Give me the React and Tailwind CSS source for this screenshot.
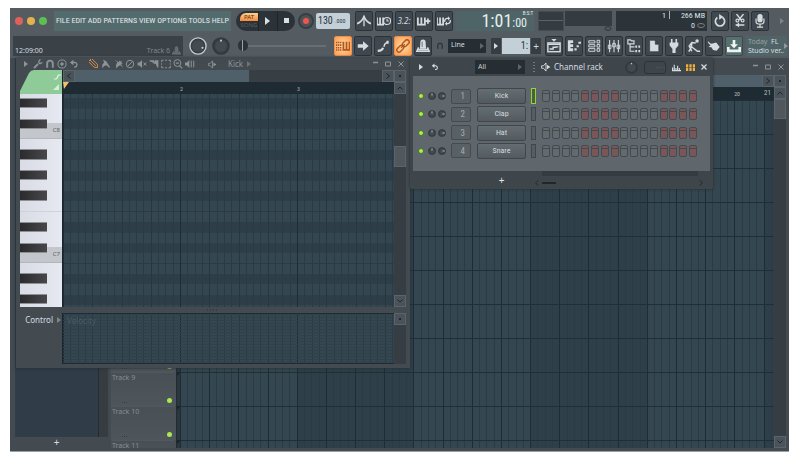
import React, { useState } from 'react';
import clsx from 'clsx';

const CONDENSED = "font-['Liberation_Sans_Narrow','Roboto_Condensed',Roboto,sans-serif]";

const MENU = ['FILE', 'EDIT', 'ADD', 'PATTERNS', 'VIEW', 'OPTIONS', 'TOOLS', 'HELP'];
const CHANNELS = ['Kick', 'Clap', 'Hat', 'Snare'];
// B down to C, true = black key
const OCTAVE = [false, true, false, true, false, true, false, false, true, false, true, false];

const Svg = ({ w = 12, h = 12, box = '0 0 16 16', children, className }) => (
    <svg
        width={w}
        height={h}
        viewBox={box}
        fill="none"
        stroke="currentColor"
        strokeWidth="1.6"
        className={clsx('shrink-0', className)}
        aria-hidden="true"
    >
        {children}
    </svg>
);

const icons = {
    metronome: (
        <>
            <path d="M0 11Q5 9.500 8 3Q11 9.500 16 11" strokeWidth="1.800" />
            <path d="M8 2v12" strokeWidth="1.500" />
        </>
    ),
    waitInput: (
        <>
            <path d="M0 4v8h7V4M3.500 4v8" strokeWidth="2" />
            <circle cx="11.5" cy="8" r="4" strokeWidth="1.300" />
            <path d="M11.500 5.500V8h2" strokeWidth="1.200" />
        </>
    ),
    overdub: <path d="M1 4v8h8V4M5 4v8M12.500 5v6M9.800 8h5.500" strokeWidth="2" />,
    loopRec: (
        <>
            <path d="M0 4v8h7V4M3.500 4v8" strokeWidth="2" />
            <path d="M9 9a3 3 0 0 1 3-4h1M15 7a3 3 0 0 1-3 4h-1" />
            <path d="M12.500 2.500l2.500 2.500-2.500 2.500zM11.500 8.500L9 11l2.500 2.500z" fill="currentColor" stroke="none" />
        </>
    ),
    typing: (
        <>
            <path d="M0 4h7M0 7h7M0 10h7M0 12.500h7" strokeDasharray="1.500 .7" strokeWidth="1.800" />
            <path d="M8.500 3v9.500h7V3M12 3v9" strokeWidth="2" />
        </>
    ),
    arrow: <path d="M2 6h6V2.500L14.500 8 8 13.500V10H2z" fill="currentColor" stroke="none" />,
    slide: (
        <>
            <path d="M2 13.500q5 0 6-3.500" strokeWidth="2.600" />
            <path d="M9 9q.500-4 4-5.500" strokeWidth="1.500" />
            <path d="M12 2h2.500v3.500H12z" fill="currentColor" stroke="none" />
        </>
    ),
    link: (
        <g transform="rotate(-45 8 8)" strokeWidth="1.600">
            <rect x="-1" y="5.500" width="9" height="5" rx="2.500" />
            <rect x="8" y="5.500" width="9" height="5" rx="2.500" />
            <path d="M5 8h6" />
        </g>
    ),
    stamp: (
        <>
            <path d="M4.500 11L5 3.500Q5 .500 8 .500t3 3L11.500 11z" fill="currentColor" stroke="none" />
            <path d="M3 9.500L1 14h14l-2-4.500M3 12h10" strokeWidth="1.800" />
            <path d="M7 3v6" stroke="#596268" strokeWidth="1" />
        </>
    ),
    playlist: (
        <>
            <path d="M5 0h6L8 3z" fill="currentColor" stroke="none" />
            <rect x="1" y="4.500" width="14" height="10" />
            <path d="M1 6h14M3 11.500h4v-2h4M10 9h3" />
        </>
    ),
    pianoRoll: (
        <path d="M1 1.500h6v3H4v1.500h3v3H4v1.500h3v3.500H1zM8.500 10.500h2.500V13H8.500zM11 7h2.500v2.500H11zM13 3h3v2.500h-3z" fill="currentColor" stroke="none" />
    ),
    rack: (
        <>
            <path d="M2 2h7v2.500H2zM2 6.500h7V9H2zM2 11h7v3H2z" strokeWidth="1.100" />
            <path d="M11.500 1.500h3v3h-3zM11.500 6.300h3v3h-3zM11.500 11h3v3h-3z" strokeWidth="1.100" />
        </>
    ),
    mixer: (
        <>
            <path d="M3 1v14M8 1v14M13 1v14" strokeWidth="1.200" />
            <path d="M1.500 7h3v4h-3zM6.500 5h3v4h-3zM11.500 7h3v4h-3z" strokeWidth="1.100" />
        </>
    ),
    browser: (
        <>
            <path d="M1 1h3l1 1.200h3V5.500H1zM3.500 6v8h5M3.500 9h5" strokeWidth="1.300" />
            <path d="M9.500 7.500h2v2.500h-2zM13 7.500h2v2.500h-2zM9.500 12.500h2V15h-2zM13 12.500h2V15h-2z" fill="currentColor" stroke="none" />
        </>
    ),
    file: <path d="M3 1.500h6.500L13.500 6v8.500H3zM9.500 1.500V6h4" fill="currentColor" stroke="#353d43" strokeWidth=".8" />,
    plug: <path d="M4.500 0h1.800v4h3.400V0h1.800v4H13v3.500L9.800 11v5H6.200v-5L3 7.500V4h1.500z" fill="currentColor" stroke="none" />,
    shovel: (
        <>
            <circle cx="11.5" cy="2.200" r="2" fill="currentColor" stroke="none" />
            <path d="M10 4.500L5.500 4 2.500 8l3 6M5.500 4.500L5 9.500l-3 5M4 8l8 6h3" strokeWidth="1.700" />
        </>
    ),
    hand: (
        <path d="M1 2.500l3.500 3 2-.500 4-1 4 5-3.500 4.500-4-1-2-3L1.500 9l2.500-1.500L1 4z" fill="currentColor" stroke="none" />
    ),
    download: (
        <path d="M6.500 1h3v5H12.500L8 10.500 3.500 6H6.500zM0 9h3v3h10V9h3v6H0z" fill="currentColor" stroke="none" />
    ),
    restart: (
        <>
            <path d="M5 4a5.300 5.300 0 1 0 6 0" strokeWidth="1.900" />
            <path d="M7 0l5 3.500-5 3z" fill="currentColor" stroke="none" />
        </>
    ),
    cut: (
        <>
            <path d="M4 0l5.500 7M12 0L6.500 7M3 12.500h10" strokeWidth="1.600" />
            <circle cx="5" cy="7.500" r="1.600" strokeWidth="1.300" />
            <circle cx="11" cy="7.500" r="1.600" strokeWidth="1.300" />
            <path d="M7 9.500l-3.500 3L7 15.500z" fill="currentColor" stroke="none" />
        </>
    ),
    mic: (
        <>
            <rect x="5" y="0" width="6" height="9.500" rx="3" fill="currentColor" stroke="none" />
            <path d="M3.500 5v3.500q0 3 4.500 3t4.500-3V5M8 11.500V15M4.500 15h7" strokeWidth="1.400" />
        </>
    ),
    magnet: <path d="M3.500 14V7a4.500 4.500 0 0 1 9 0v7" strokeWidth="3" />,
    wrench: (
        <>
            <path d="M1.500 14.500L8 8" strokeWidth="3" />
            <path d="M13.500 6.500h-4v-4M9.500 6.500A4 4 0 0 1 12 1M10 7a4 4 0 0 0 5-2" strokeWidth="1.800" />
        </>
    ),
    target: (
        <>
            <circle cx="8" cy="8" r="6.500" />
            <circle cx="8" cy="8" r="2" fill="currentColor" />
        </>
    ),
    undo: (
        <>
            <path d="M4 5.500h5.500a3.800 3.800 0 0 1 0 7.500H8" strokeWidth="2.200" />
            <path d="M7 1L1.500 5.500 7 10z" fill="currentColor" stroke="none" />
        </>
    ),
    pencil: (
        <g transform="rotate(45 8 8)">
            <path d="M-1 4.500h13l4 3.500-4 3.500H-1zM-1 8h13" strokeWidth="1.500" />
        </g>
    ),
    brush: <path d="M3 1l5 2 4 6 3 5-3-1-3-3-4 1-3 4V9l3-4z" fill="currentColor" stroke="none" />,
    brushPlus: <path d="M2 1l4 2 3 2 2-3 1 2 3-1-2 3 3 1-3 1 3 6-4-4-3 1-4 4V9l2-4z" fill="currentColor" stroke="none" />,
    ban: (
        <>
            <circle cx="8" cy="8" r="6" />
            <path d="M4 12l8-8" />
        </>
    ),
    mute: (
        <>
            <path d="M1 5.500h3l4-4v13l-4-4H1z" fill="currentColor" stroke="none" />
            <path d="M10.500 5.500l4.500 5M15 5.500l-4.500 5" strokeWidth="1.500" />
        </>
    ),
    slice: <path d="M1 2h7v3.500H5.500L4 4.500H1zM9 2h6v12l-2-1-2-5-4-1V4.500h2z" fill="currentColor" stroke="none" />,
    select: <path d="M1 5V2h3M12 2h3v3M15 11v3h-3M4 14H1v-3M6.500 2h3M6.500 14h3M1 7v2M15 7v2" />,
    zoomTool: (
        <>
            <circle cx="7" cy="6.500" r="5.500" />
            <path d="M4.500 6.500h5M10.500 11l4.500 4" strokeWidth="2" />
        </>
    ),
    playback: (
        <>
            <path d="M0 5.500h3l4-4v13l-4-4H0z" fill="currentColor" stroke="none" />
            <path d="M10 2.500v11M14 2.500v11" strokeWidth="1.600" />
        </>
    ),
    speaker: (
        <>
            <path d="M1 6h3l4-4.500v13L4 10H1z" strokeWidth="1.500" />
            <path d="M9.500 4.500v7L15 8z" fill="currentColor" stroke="none" />
        </>
    ),
    graph: <path d="M1 14V8M4 14V3M7 14V9M10 14V5M13 14V9M0 13.500h16" strokeWidth="2" />,
    steps: <path d="M0 2h4v5H0zM6 2h4v5H6zM12 2h4v5h-4zM0 8h4v6H0zM6 8h4v6H6zM12 8h4v6h-4z" fill="currentColor" stroke="none" />,
};

const Icon = ({ name, size = 12, className }) => (
    <Svg w={size} h={size} className={className}>
        {icons[name]}
    </Svg>
);

const Arrow = ({ className }) => (
    <Svg w={4} h={6} box="0 0 4 6" className={className}>
        <path d="M0 0l4 3-4 3z" fill="currentColor" stroke="none" />
    </Svg>
);

const ToolButton = ({ label, icon, active, teal, children }) => (
    <button
        aria-label={label}
        className={clsx(
            'flex h-5 w-[18px] shrink-0 items-center justify-center rounded-[2px] border',
            active && 'border-[#f08f4a] bg-radial from-[#ffe0a8] to-[#fb9a4e] text-[#b0561c]',
            teal && 'border-[#3c4a50] bg-[#55706f] text-[#eef4f4]',
            !active && !teal && 'border-[#2b3339] bg-[#40484f] text-[#d5dce0]'
        )}
    >
        {children || <Icon name={icon} size={14} />}
    </button>
);

const Knob = ({ label, size, value = 50, bright }) => (
    <label className="relative flex shrink-0 items-center justify-center">
        <Svg w={size} h={size} box="0 0 20 20">
            <circle cx="10" cy="10" r="9" stroke={bright ? '#c3ccd0' : '#30383d'} strokeWidth="1.500" fill="#363e44" />
            <circle cx="10" cy="10" r="6.500" fill="#434b51" stroke="none" />
            {size > 10 ? (
                <circle cx={value > 50 ? 15 : 10} cy={value > 50 ? 12 : 4} r="1.200" fill="#c3cace" stroke="none" />
            ) : (
                <path d={value > 50 ? 'M11 10h6' : 'M10 9V3'} stroke="#c3cace" strokeWidth="2" />
            )}
        </Svg>
        <input type="range" aria-label={label} defaultValue={value} className="absolute inset-0 w-full opacity-0" />
    </label>
);

const WindowButtons = () => (
    <div className="flex items-center gap-[7px] text-[#8b9499]">
        <button aria-label="Minimize">
            <Svg w={5} h={6} box="0 0 5 6"><path d="M0 1.500h5" strokeWidth="1.500" /></Svg>
        </button>
        <button aria-label="Maximize">
            <Svg w={6} h={6} box="0 0 6 6"><path d="M.5 1h5v4h-5z" strokeWidth="1" /></Svg>
        </button>
        <button aria-label="Close">
            <Svg w={6} h={6} box="0 0 6 6"><path d="M.5.5l5 5M5.500.5l-5 5" strokeWidth="1" /></Svg>
        </button>
    </div>
);

const ScrollButton = ({ label, d }) => (
    <button aria-label={label} className="flex size-3 shrink-0 items-center justify-center border border-[#5a646a] bg-[#4a5359] text-[#1f272c]">
        <Svg w={6} h={6} box="0 0 6 6"><path d={d} strokeWidth="1" /></Svg>
    </button>
);

const UP = 'M.5 4.500L3 2l2.500 2.500';
const DOWN = 'M.5 1.500L3 4l2.500-2.500';
const LEFT = 'M4.500.5L1.500 3l3 2.500';
const RIGHT = 'M1.500.5l3 2.500-3 2.500';
const DOT = 'M2.500 2v2M3.500 2v2';

// One bar: four beats with four steps each
const Bar = ({ className, soft }) => (
    <div className={clsx('flex', className)}>
        {Array.from({ length: 16 }, (_, i) => (
            <div
                key={i}
                className={clsx(
                    'flex-1 border-l',
                    i % 4 !== 0 && 'border-[#2a3b45]',
                    i % 4 === 0 && (soft && i > 0 ? 'border-[#263741]' : 'border-[#1d2d37]')
                )}
            />
        ))}
    </div>
);

const TopToolbar = () => (
    <div className="flex h-[25px] items-center pl-[5px]">
        <div className="flex shrink-0 gap-1">
            <button aria-label="Close window" className="size-2 rounded-full bg-[#e0605a]" />
            <button aria-label="Minimize window" className="size-2 rounded-full bg-[#e5b14a]" />
            <button aria-label="Zoom window" className="size-2 rounded-full bg-[#5cbf54]" />
        </div>
        <nav className={clsx('ml-[7px] flex h-5 w-[177px] shrink-0 items-center justify-between bg-[#546b6e] px-[2px] text-[8px] text-[#e3eaec]', CONDENSED)}>
            {MENU.map((item) => (
                <a key={item} href="#">{item}</a>
            ))}
        </nav>
        <div className="ml-[5px] flex h-5 w-[59px] shrink-0 overflow-hidden rounded-full bg-[#2b3238] text-[#d9dfe2]">
            <div className="flex w-[22px] flex-col justify-center pl-1 text-[6px] leading-[8px]">
                <button className="rounded-tl-md bg-linear-to-b from-[#ffd08a] to-[#f58a3c] text-[#4a2a10]">PAT</button>
                <button className="text-[#565e63]">SONG</button>
            </div>
            <button aria-label="Play" className="flex flex-1 items-center justify-center border-l border-[#1e2529]">
                <Svg w={5} h={8} box="0 0 5 8"><path d="M0 0l5 4-5 4z" fill="currentColor" stroke="none" /></Svg>
            </button>
            <button aria-label="Stop" className="flex flex-1 items-center justify-center border-l border-[#1e2529]">
                <span className="size-[5px] bg-[#d9dfe2]" />
            </button>
        </div>
        <button aria-label="Record" className="ml-[3px] flex size-4 shrink-0 items-center justify-center rounded-full border-2 border-[#363e43] bg-[#4b5358]">
            <span className="size-[6px] rounded-full bg-[#f0544c]" />
        </button>
        <div className={clsx('ml-[2px] flex h-4 w-[34px] shrink-0 items-center rounded-[2px] bg-[#c3d0d8] pl-[2px] text-[#27323a]', CONDENSED)}>
            <input aria-label="Tempo" defaultValue="130" className="w-[17px] text-[10px]" />
            <input aria-label="Tempo fraction" defaultValue=".000" className="w-[15px] text-[6px]" />
        </div>
        <div className="ml-[5px] flex shrink-0 gap-[2px]">
            <ToolButton label="Metronome" icon="metronome" />
            <ToolButton label="Wait for input" icon="waitInput" />
            <ToolButton label="Countdown">
                <span className="text-[8px] italic">3.2:</span>
            </ToolButton>
            <ToolButton label="Overdub" icon="overdub" />
            <ToolButton label="Loop record" icon="loopRec" />
        </div>
        <div className={clsx('ml-[2px] flex h-5 w-[79px] shrink-0 items-center justify-end bg-[#4f6466] pr-px leading-none text-[#e6eff0]', CONDENSED)}>
            <span className="text-[18px]">1:01</span>
            <div className="flex flex-col">
                <span className="self-end text-[5px] leading-[5px]">B:S:T</span>
                <span className="mr-[6px] text-[12px] leading-[15px]">:00</span>
            </div>
        </div>
        <div className="ml-1 flex h-5 w-[26px] shrink-0 items-center border border-[#454d53] bg-[#343c42]">
            <div className="h-px w-full bg-[#59636a]" />
        </div>
        <div className="ml-px flex h-5 w-[47px] shrink-0 flex-col items-end">
            <div className="h-[15px] w-full bg-[#343c42]" />
            <Svg w={8} h={5} box="0 0 8 5"><ellipse cx="4" cy="2.500" rx="3" ry="1.800" stroke="#2c3439" strokeWidth="1" /></Svg>
        </div>
        <div className={clsx('ml-1 flex h-5 w-[91px] shrink-0 bg-[#2c343a] text-[8px] leading-[10px] text-[#dfe5e8]', CONDENSED)}>
            <div className="flex w-[54px] items-start justify-end">
                <span className="mr-[3px]">1</span>
                <span className="h-2 w-px bg-[#aab2b6]" />
            </div>
            <div className="flex flex-1 flex-col items-end pr-[2px]">
                <span>266 MB</span>
                <span className="flex items-center gap-[2px]">
                    0
                    <Svg w={8} h={5} box="0 0 8 5"><ellipse cx="4" cy="2.500" rx="3.500" ry="2" stroke="#778086" strokeWidth="1" /></Svg>
                </span>
            </div>
        </div>
        <div className="ml-1 flex shrink-0 gap-[2px]">
            <ToolButton label="Restart" icon="restart" />
            <ToolButton label="Cut" icon="cut" />
            <ToolButton label="Record audio" icon="mic" />
        </div>
        <Arrow className="mr-[5px] ml-auto text-[#7d868b]" />
    </div>
);

const SecondToolbar = () => (
    <div className="flex h-[25px] items-center pl-[3px] text-[#d5dce0]">
        <div className="flex h-5 w-[170px] shrink-0 items-end justify-between bg-[#3a4248] px-[2px] text-[7px] leading-[11px]">
            <span>12:09:00</span>
            <span className="flex items-center gap-[2px] text-[#7d868b]">
                Track 6
                <Icon name="stamp" size={9} className="text-[#667076]" />
            </span>
        </div>
        <div className="ml-[6px] flex shrink-0 items-center gap-[5px]">
            <Knob label="Main volume" size={18} value={80} bright />
            <Knob label="Main pitch" size={18} />
        </div>
        <input
            type="range"
            aria-label="Shuffle"
            defaultValue={0}
            className="ml-2 h-3 w-[88px] shrink-0 appearance-none bg-[linear-gradient(#666f75,#666f75)] bg-[length:100%_2px] bg-center bg-no-repeat [&::-webkit-slider-thumb]:h-[11px] [&::-webkit-slider-thumb]:w-[10px] [&::-webkit-slider-thumb]:appearance-none [&::-webkit-slider-thumb]:rounded-full [&::-webkit-slider-thumb]:bg-[linear-gradient(90deg,#2c3439_4px,#9aa3a8_4px_5px,#2c3439_5px)]"
        />
        <div className="ml-2 flex shrink-0 gap-[2px]">
            <ToolButton label="Typing keyboard" icon="typing" active />
            <ToolButton label="Auto scroll" icon="arrow" />
            <ToolButton label="Slide" icon="slide" />
            <ToolButton label="Link" icon="link" active />
            <ToolButton label="Stamp" icon="stamp" />
        </div>
        <Icon name="magnet" size={8} className="mx-1 text-[#343b40]" />
        <div className="relative flex shrink-0 items-center">
            <select aria-label="Snap" className="h-[14px] w-[38px] appearance-none bg-[#272e33] pl-[3px] text-[7px] text-[#d5dce0]">
                <option>Line</option>
            </select>
            <Arrow className="pointer-events-none absolute right-[2px] text-[#5d666b]" />
        </div>
        <div className="ml-[5px] flex h-4 shrink-0 items-center gap-px">
            <button aria-label="Pattern picker" className="flex h-4 w-[10px] items-center justify-center bg-[#363e44]">
                <Arrow />
            </button>
            <input aria-label="Pattern" defaultValue="1:" className={clsx('h-4 w-7 bg-[#c3d0d8] pr-[2px] text-right text-[10px] text-[#27323a]', CONDENSED)} />
            <button aria-label="Add pattern" className="h-4 w-[10px] bg-[#363e44] text-[10px] leading-4">+</button>
        </div>
        <div className="ml-1 flex shrink-0 gap-[2px]">
            <ToolButton label="Playlist" icon="playlist" />
            <ToolButton label="Piano roll" icon="pianoRoll" />
            <ToolButton label="Channel rack" icon="rack" />
            <ToolButton label="Mixer" icon="mixer" />
            <ToolButton label="Browser" icon="browser" />
            <ToolButton label="Project" icon="file" />
            <ToolButton label="Plugins" icon="plug" />
            <ToolButton label="Tools" icon="shovel" />
            <ToolButton label="Touch" icon="hand" />
            <ToolButton label="Downloads" icon="download" teal />
        </div>
        <a href="#" className="mr-[2px] ml-[3px] flex h-5 min-w-0 flex-1 items-center justify-between bg-[#506467] pr-[3px] pl-[2px] text-[7px] leading-[9px] whitespace-nowrap">
            <span>
                <span className="text-[#93a3a5]">Today</span>&nbsp; FL
                <br />
                Studio ver..
            </span>
            <Arrow className="text-[#8b999b]" />
        </a>
    </div>
);

const TrackHeader = ({ n }) => {
    const [on, setOn] = useState(true);
    return (
        <div className="flex h-[34px] shrink-0 items-stretch">
            <div className="flex w-[65px] flex-col justify-between rounded-tr-[3px] border-t border-[#51595e] bg-linear-to-b from-[#485056] to-[#4e565b] pr-1 pl-px">
                <span className="text-[7px] leading-[9px] text-[#858d92]">Track {n}</span>
                <div className="flex items-end justify-between pb-[3px] pl-[10px] text-[#363e44]">
                    <Svg w={6} h={1} box="0 0 6 1"><path d="M0 .5h6" strokeWidth="1" strokeDasharray="1 1" /></Svg>
                    <input
                        type="checkbox"
                        aria-label={`Track ${n} on`}
                        checked={on}
                        onChange={() => setOn(!on)}
                        className="size-[5px] appearance-none rounded-full bg-[#353d42] checked:bg-[#a9e84e]"
                    />
                </div>
            </div>
            <div className="w-1 border-l border-[#222b31] bg-[#2b363d] text-[#1a2329]">
                <Svg w={4} h={4} box="0 0 4 4"><path d="M0 0h4L0 4z" fill="currentColor" stroke="none" /></Svg>
            </div>
        </div>
    );
};

const Playlist = () => (
    <section aria-label="Playlist" className="flex h-full gap-[3px] bg-[#434b51] pr-[3px] pb-[3px] pl-[5px]">
        <aside className="flex w-[93px] shrink-0 flex-col">
            <div className="flex flex-1 bg-[#303c47]">
                <div className="flex-1" />
                <div className="w-[10px] border-l border-[#232c32] bg-[#353c42]" />
            </div>
            <button aria-label="Add picker item" className="h-[11px] pr-[10px] text-[10px] leading-[11px] text-[#d5dce0]">+</button>
        </aside>
        <div className="flex min-w-0 flex-1 flex-col">
            <div className="flex h-[17px] shrink-0 items-center justify-end pr-[2px]">
                <WindowButtons />
            </div>
            <div className="flex h-3 shrink-0">
                <div className="flex-1 bg-[#50606a]" />
                <ScrollButton label="Scroll right" d={RIGHT} />
                <ScrollButton label="Zoom" d={DOT} />
            </div>
            <div className="flex min-h-0 flex-1">
                <div className="flex min-w-0 flex-1 flex-col">
                    <div className={clsx('flex h-[13px] shrink-0 items-center justify-end gap-6 bg-[#1e2b33] pr-[3px] text-[#b5bec2]', CONDENSED)}>
                        <span className="text-[6px]">20</span>
                        <span className="text-[7px]">21</span>
                    </div>
                    <div className="flex min-h-0 flex-1">
                        <div className="h-full shrink-0 overflow-hidden">
                            {Array.from({ length: 11 }, (_, i) => (
                                <TrackHeader key={i} n={i + 1} />
                            ))}
                        </div>
                        <div className="relative min-w-0 flex-1 overflow-hidden">
                            <div className="flex h-full w-[1167px]">
                                {Array.from({ length: 10 }, (_, i) => (
                                    <Bar key={i} className={clsx('flex-1', i % 2 === 0 ? 'bg-[#34464f]' : 'bg-[#2e3f49]')} />
                                ))}
                            </div>
                            <div className="absolute inset-0 bg-[repeating-linear-gradient(to_bottom,#1f2f38_0_1px,transparent_1px_34px)]" />
                        </div>
                    </div>
                </div>
                <div className="flex w-3 shrink-0 flex-col bg-[#363e44]">
                    <ScrollButton label="Scroll up" d={UP} />
                    <div className="h-5 border border-[#5a646a] bg-[#50585e]" />
                    <div className="flex-1" />
                    <ScrollButton label="Scroll down" d={DOWN} />
                </div>
            </div>
        </div>
    </section>
);

const KeyOctave = ({ name }) => (
    <div className="relative flex h-[124px] shrink-0 flex-col">
        {/* C key under the black keys */}
        <div className="absolute inset-x-0 bottom-0 flex h-4 items-center justify-end border-b border-[#b3b7bb] bg-[#c3c6ca] pr-[2px] text-[6px] text-[#5d6367]">
            {name}
        </div>
        {OCTAVE.map((black, i) => (
            <div key={i} className={clsx('relative flex-1', i === 7 && 'border-t border-[#ced2da]')}>
                {black && <div className="h-full w-[27px] border-y border-[#8d9196] bg-linear-to-r from-[#2b2b2d] to-[#48484a]" />}
            </div>
        ))}
    </div>
);

const GridOctave = () => (
    <div className="flex h-[124px] shrink-0 flex-col">
        {OCTAVE.map((black, i) => (
            <div key={i} className={clsx('flex-1', black ? 'bg-[#2d3e48]' : 'bg-[#34464f]', (i === 0 || i === 7) && 'border-t border-[#2b3b45]')} />
        ))}
    </div>
);

const BeatLines = () => (
    <div className="absolute inset-0 flex overflow-hidden">
        {[1, 2, 3].map((bar) => (
            <Bar key={bar} soft className="w-[117px] shrink-0" />
        ))}
    </div>
);

const PIANO_TOOLS = [
    ['wrench', 'Tools'],
    ['magnet', 'Snap'],
    ['target', 'Stamp'],
    ['undo', 'Undo'],
    ['pencil', 'Draw'],
    ['brush', 'Paint'],
    ['brushPlus', 'Paint drum'],
    ['ban', 'Delete'],
    ['mute', 'Mute'],
    ['slice', 'Slice'],
    ['select', 'Select'],
    ['zoomTool', 'Zoom'],
    ['playback', 'Playback'],
];

const PianoRoll = () => (
    <section aria-label="Piano roll" className="absolute top-0 left-[6px] flex w-[394px] flex-col bg-[#434b51] pr-1 pb-1 pl-1 shadow-[0_0_3px_#222b31]">
        <header className="flex h-3 items-center text-[#8b9499]">
            <Arrow className="ml-1 mr-[5px]" />
            <div className="flex gap-[2px]">
                {PIANO_TOOLS.map(([icon, label]) => (
                    <button
                        key={icon}
                        aria-label={label}
                        className={clsx(icon === 'pencil' && 'ml-2 text-[#d98a4a]')}
                    >
                        <Icon name={icon} size={10} />
                    </button>
                ))}
            </div>
            <Icon name="speaker" size={9} className="ml-[13px]" />
            <a href="#" className="ml-[11px] flex items-center gap-1 text-[8px]">
                Kick
                <Arrow className="text-[#6a7378]" />
            </a>
            <div className="mr-[2px] ml-auto">
                <WindowButtons />
            </div>
        </header>

        <div className="flex">
            <div className="w-[43px] shrink-0 border-r border-[#1b252b]">
                <Svg w={42} h={24} box="0 0 42 24" className="block">
                    <path d="M0 24V21L9 3Q11 0 14 0H42V24z" fill="#8fcb98" stroke="none" />
                    <path d="M34 9h2q1 0 1.500-2T39 5h2" stroke="#e8f5ea" strokeWidth="1.200" />
                    <path d="M33 20l6-6v6z" fill="#d5edd9" stroke="none" />
                </Svg>
                <div className="flex h-[213px] flex-col overflow-hidden bg-linear-to-r from-[#d9dce4] to-[#e6e9f2]">
                    <div className="flex h-[45px] shrink-0 flex-col justify-end overflow-hidden">
                        <KeyOctave name="C8" />
                    </div>
                    <KeyOctave name="C7" />
                    <KeyOctave />
                </div>
            </div>
            <div className="flex min-w-0 flex-1 flex-col">
                <div className="flex h-3 bg-[#373f44]">
                    <ScrollButton label="Scroll left" d={LEFT} />
                    <div className="w-[174px] bg-[#50606a]" />
                    <div className="flex-1" />
                    <ScrollButton label="Scroll right" d={RIGHT} />
                </div>
                <div className={clsx('flex h-3 items-center bg-[#1e2b33] text-[6px] text-[#a5afb4]', CONDENSED)}>
                    <div className="flex h-full w-[117px] items-start">
                        <Svg w={6} h={7} box="0 0 6 7"><path d="M0 0h6L1 7z" fill="#f0c36a" stroke="none" /></Svg>
                    </div>
                    <div className="w-[117px]">2</div>
                    <div>3</div>
                </div>
                <div className="relative h-[213px] overflow-hidden">
                    <div className="flex h-[45px] flex-col justify-end overflow-hidden">
                        <GridOctave />
                    </div>
                    <GridOctave />
                    <GridOctave />
                    <BeatLines />
                </div>
            </div>
            <div className="flex w-3 shrink-0 flex-col bg-[#363e44]">
                <ScrollButton label="Zoom" d={DOT} />
                <ScrollButton label="Scroll up" d={UP} />
                <div className="mt-[52px] h-[21px] border border-[#5a646a] bg-[#50585e]" />
                <div className="flex-1" />
                <ScrollButton label="Scroll down" d={DOWN} />
            </div>
        </div>

        <div className="flex h-[6px] items-center justify-center text-[#2a3237]">
            <Svg w={12} h={2} box="0 0 12 2"><path d="M0 1h12" strokeWidth="1" strokeDasharray="1 2" /></Svg>
        </div>

        <div className="flex h-[51px]">
            <div className="w-[43px] shrink-0 border-r border-[#1b252b] pr-px">
                <button className="flex h-[14px] w-full items-center justify-end gap-1 text-[8px] text-[#d5dce0]">
                    Control
                    <Arrow className="text-[#7d868b]" />
                </button>
            </div>
            <div className="relative min-w-0 flex-1 border-y border-[#1f2c34] bg-[#34464f]">
                <BeatLines />
                <div className="absolute inset-0 bg-[repeating-linear-gradient(to_bottom,#30414b_0_1px,transparent_1px_3px)]" />
                <span className="absolute top-0 left-1 text-[8px] leading-[13px] text-[#4b5b63]">Velocity</span>
            </div>
            <div className="w-3 shrink-0 bg-[#363e44]">
                <ScrollButton label="Scroll lane" d={DOT} />
            </div>
        </div>
    </section>
);

const Channel = ({ name, index, selected, onSelect }) => {
    const [steps, setSteps] = useState(Array(16).fill(false));

    const toggle = (i) => setSteps(steps.map((s, n) => (n === i ? !s : s)));

    return (
        <div className="flex h-4 items-center pl-[5px]">
            <input type="checkbox" defaultChecked aria-label={`${name} on`} className="size-[6px] appearance-none rounded-full border border-[#4c6a38] bg-[#353d42] checked:bg-[#a9f04a]" />
            <div className="ml-1 flex gap-[2px]">
                <Knob label={`${name} pan`} size={8} />
                <Knob label={`${name} volume`} size={8} value={80} />
            </div>
            <input
                aria-label={`${name} mixer track`}
                defaultValue={index + 1}
                className={clsx('ml-[5px] h-[15px] w-5 rounded-[2px] border border-[#434b50] bg-[#596166] pr-[5px] text-right text-[9px] text-[#a3abb0]', CONDENSED)}
            />
            <button
                onClick={onSelect}
                className={clsx('ml-[6px] h-4 w-[49px] rounded-[2px] border border-[#3f474c] bg-linear-to-b from-[#646d72] to-[#535b60] text-[8px] text-[#d5dbde]', CONDENSED)}
            >
                {name}
            </button>
            <button
                aria-label={`Select ${name}`}
                onClick={onSelect}
                className={clsx('ml-[5px] w-[5px] border', selected ? 'h-4 border-[#8fd43c] bg-[#4a6238]' : 'h-[14px] border-[#3f474c] bg-[#565e63]')}
            />
            <div className="ml-[6px] flex w-[155px] justify-between">
                {steps.map((on, i) => (
                    <button
                        key={i}
                        aria-label={`${name} step ${i + 1}`}
                        aria-pressed={on}
                        onClick={() => toggle(i)}
                        className={clsx(
                            'flex h-3 w-2 flex-col rounded-[2px] border border-[#434b50] pt-[2px]',
                            Math.floor(i / 4) % 2 ? 'bg-[#7a5659]' : 'bg-[#636b6f]',
                            on && 'brightness-150'
                        )}
                    >
                        <span className="h-px w-full bg-[#45484c]" />
                    </button>
                ))}
            </div>
        </div>
    );
};

const ChannelRack = () => {
    const [selected, setSelected] = useState(0);

    return (
        <section aria-label="Channel rack" className="absolute top-0 left-[400px] flex w-[303px] flex-col rounded-b-[2px] bg-[#3e464c] px-[3px] shadow-[0_0_3px_#222b31]">
            <header className="flex h-[18px] items-center text-[#d5dce0]">
                <Arrow className="ml-[6px]" />
                <button aria-label="Undo" className="ml-2"><Icon name="undo" size={8} /></button>
                <div className="relative ml-9 flex items-center">
                    <select aria-label="Channel filter" className="h-[14px] w-[50px] appearance-none bg-[#272e33] pl-[3px] text-[7px] text-[#c5ccd0]">
                        <option>All</option>
                    </select>
                    <Arrow className="pointer-events-none absolute right-[3px] text-[#5d666b]" />
                </div>
                <Svg w={2} h={10} box="0 0 2 10" className="ml-2 text-[#7d868b]"><path d="M1 0v10" strokeDasharray="1 2" /></Svg>
                <Icon name="speaker" size={10} className="ml-[6px]" />
                <h2 className="ml-[3px] w-[71px] text-[8px]">Channel rack</h2>
                <Knob label="Swing" size={13} />
                <div className="ml-[6px] h-[13px] w-[22px] rounded-[3px] border border-[#2c3439] text-right text-[6px] leading-[11px] text-[#5d666b]">--- :</div>
                <button aria-label="Graph editor" className="ml-[6px]"><Icon name="graph" size={9} /></button>
                <button aria-label="Step editor" className="ml-[5px] text-[#f0ae3c]"><Icon name="steps" size={9} /></button>
                <button aria-label="Close rack" className="ml-[6px]">
                    <Svg w={6} h={6} box="0 0 6 6"><path d="M.5.5l5 5M5.500.5l-5 5" strokeWidth="1.300" /></Svg>
                </button>
            </header>
            <div className="h-[95px] bg-[#5f676c] pt-3">
                <div className="flex h-[71px] flex-col justify-between">
                    {CHANNELS.map((name, i) => (
                        <Channel key={name} name={name} index={i} selected={selected === i} onSelect={() => setSelected(i)} />
                    ))}
                </div>
            </div>
            <footer className="flex h-[18px]">
                <button aria-label="Add channel" className="ml-[64px] w-[49px] text-[10px] leading-[18px] text-[#e3e8ea]">+</button>
                <div className="ml-2 flex flex-1 flex-col justify-between pr-[6px] pb-[3px] text-[#262e33]">
                    <div className="mr-[6px] ml-2 h-[5px] bg-[#343b41]" />
                    <div className="flex items-center">
                        <Svg w={6} h={6} box="0 0 6 6"><path d={LEFT} strokeWidth="1" /></Svg>
                        <div className="ml-[2px] h-[2px] w-[14px] bg-[#1f272c]" />
                        <Svg w={6} h={6} box="0 0 6 6" className="ml-auto"><path d={RIGHT} strokeWidth="1" /></Svg>
                    </div>
                </div>
            </footer>
        </section>
    );
};

export default function App() {
    return (
        <div className="h-screen overflow-hidden bg-white pt-2 pr-[11px] pb-[13px] pl-[10px] font-['Noto_Sans','Open_Sans',sans-serif]">
            <div className="flex h-full flex-col overflow-hidden border-b border-[#9aa0a3] bg-[#545c62]">
                <TopToolbar />
                <SecondToolbar />
                <main className="relative min-h-0 flex-1">
                    <Playlist />
                    <PianoRoll />
                    <ChannelRack />
                </main>
            </div>
        </div>
    );
}
